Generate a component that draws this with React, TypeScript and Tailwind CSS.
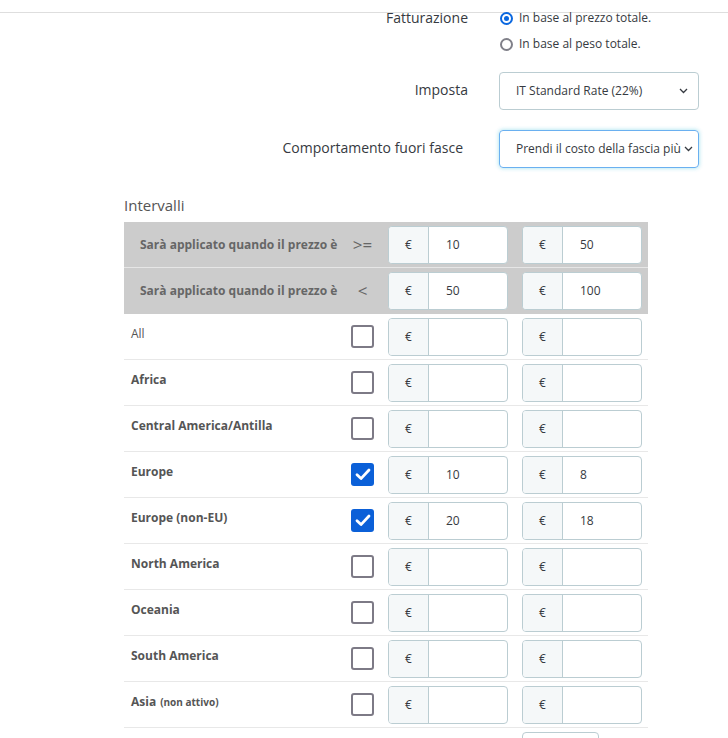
import React from "react";

type Row = { name: string; bold: boolean; note?: string; checked: boolean; a: string; b: string };

const rows: Row[] = [
  { name: "All", bold: false, checked: false, a: "", b: "" },
  { name: "Africa", bold: true, checked: false, a: "", b: "" },
  { name: "Central America/Antilla", bold: true, checked: false, a: "", b: "" },
  { name: "Europe", bold: true, checked: true, a: "10", b: "8" },
  { name: "Europe (non-EU)", bold: true, checked: true, a: "20", b: "18" },
  { name: "North America", bold: true, checked: false, a: "", b: "" },
  { name: "Oceania", bold: true, checked: false, a: "", b: "" },
  { name: "South America", bold: true, checked: false, a: "", b: "" },
  { name: "Asia", bold: true, note: "(non attivo)", checked: false, a: "", b: "" },
];

const Chevron = () => (
  <svg width="9" height="6" viewBox="0 0 9 6" fill="none">
    <path d="M1 1l3.5 3.5L8 1" stroke="#363a41" strokeWidth="1.3" />
  </svg>
);

const Radio = ({ checked }: { checked: boolean }) =>
  checked ? (
    <span className="w-[13px] h-[13px] rounded-full border-2 border-[#0b68e0] flex items-center justify-center">
      <span className="w-[5px] h-[5px] rounded-full bg-[#0b68e0]" />
    </span>
  ) : (
    <span className="w-[13px] h-[13px] rounded-full border-2 border-[#808089]" />
  );

const Checkbox = ({ checked }: { checked: boolean }) =>
  checked ? (
    <span className="w-[23px] h-[23px] rounded-[3px] bg-[#0b60d8] flex items-center justify-center">
      <svg width="16" height="13" viewBox="0 0 16 13" fill="none">
        <path d="M2 6.8l4 3.8L14 2" stroke="#fff" strokeWidth="2.8" strokeLinecap="round" strokeLinejoin="round" />
      </svg>
    </span>
  ) : (
    <span className="w-[23px] h-[23px] rounded-[3px] border-2 border-[#7d7a86] bg-white" />
  );

const EuroInput = ({ value, className = "" }: { value: string; className?: string }) => (
  <div className={`flex w-[120px] h-[38px] border border-[#bbcdd2] rounded-[4px] overflow-hidden bg-white ${className}`}>
    <span className="w-[40px] bg-[#f5f8f9] border-r border-[#bbcdd2] flex items-center justify-center text-[12px] text-[#363a41]">
      €
    </span>
    <span className="flex-1 flex items-center pl-[17px] text-[12px] text-[#363a41]">{value}</span>
  </div>
);

export default function App() {
  return (
    <div className="w-[728px] bg-white text-[#363a41]" style={{ fontFamily: '"Open Sans", sans-serif' }}>
      <div className="h-[13px] border-b border-[#dedede]" />

      <div className="-mt-[7px] flex">
        <div className="w-[468px] text-right text-[14px] leading-[24px]">Fatturazione</div>
        <div className="ml-[32px] flex flex-col">
          <label className="flex items-center gap-[6px] h-[24px] text-[12px]">
            <Radio checked />
            In base al prezzo totale.
          </label>
          <label className="flex items-center gap-[6px] h-[24px] mt-[2px] text-[12px]">
            <Radio checked={false} />
            In base al peso totale.
          </label>
        </div>
      </div>

      <div className="mt-[16px] flex items-center">
        <div className="w-[468px] text-right text-[14px] -mt-[3px]">Imposta</div>
        <div className="ml-[31px] w-[200px] h-[38px] border border-[#bbcdd2] rounded-[4px] flex items-center pl-[16px] pr-[10px] text-[12px]">
          <span className="flex-1">IT Standard Rate (22%)</span>
          <Chevron />
        </div>
      </div>

      <div className="mt-[20px] flex items-center">
        <div className="w-[463px] text-right text-[14px] -mt-[3px]">Comportamento fuori fasce</div>
        <div className="ml-[36px] w-[200px] h-[38px] border border-[#6ab0f0] rounded-[4px] shadow-[0_0_4px_rgba(37,185,215,0.45)] flex items-center pl-[16px] pr-[5px] text-[12px]">
          <span className="flex-1 whitespace-nowrap">Prendi il costo della fascia più</span>
          <span className="ml-[3px]">
            <Chevron />
          </span>
        </div>
      </div>

      <div className="ml-[124px] mt-[27px] text-[15px] leading-[20px] text-[#555]">Intervalli</div>

      <div className="ml-[124px] mt-[7px] w-[524px]">
        {[">=", "<"].map((op, i) => (
          <div
            key={op}
            className={`flex items-center h-[46px] bg-[#cccccc] ${i === 0 ? "border-b border-[#e6e6e6]" : ""}`}
          >
            <div className="w-[220px] pl-[16px] text-[12px] font-bold text-[#666]">Sarà applicato quando il prezzo è</div>
            <div className="w-[37px] text-center text-[17px] text-[#666]">{op}</div>
            <EuroInput value={i === 0 ? "10" : "50"} className="ml-[7px]" />
            <EuroInput value={i === 0 ? "50" : "100"} className="ml-[14px]" />
          </div>
        ))}
        {rows.map((r) => (
          <div key={r.name} className="flex items-center h-[46px] border-b border-[#e8e8e8]">
            <div className={`w-[220px] pl-[7px] -mt-[5px] text-[12px] text-[#555] ${r.bold ? "font-bold" : ""}`}>
              {r.name}
              {r.note && <span className="text-[10px] ml-[4px]">{r.note}</span>}
            </div>
            <div className="w-[37px] flex justify-center">
              <Checkbox checked={r.checked} />
            </div>
            <EuroInput value={r.a} className="ml-[7px]" />
            <EuroInput value={r.b} className="ml-[14px]" />
          </div>
        ))}
        <div className="flex">
          <div className="ml-[398px] mt-[4px] w-[77px] h-[30px] border border-[#bbcdd2] rounded-[4px]" />
        </div>
      </div>
    </div>
  );
}
